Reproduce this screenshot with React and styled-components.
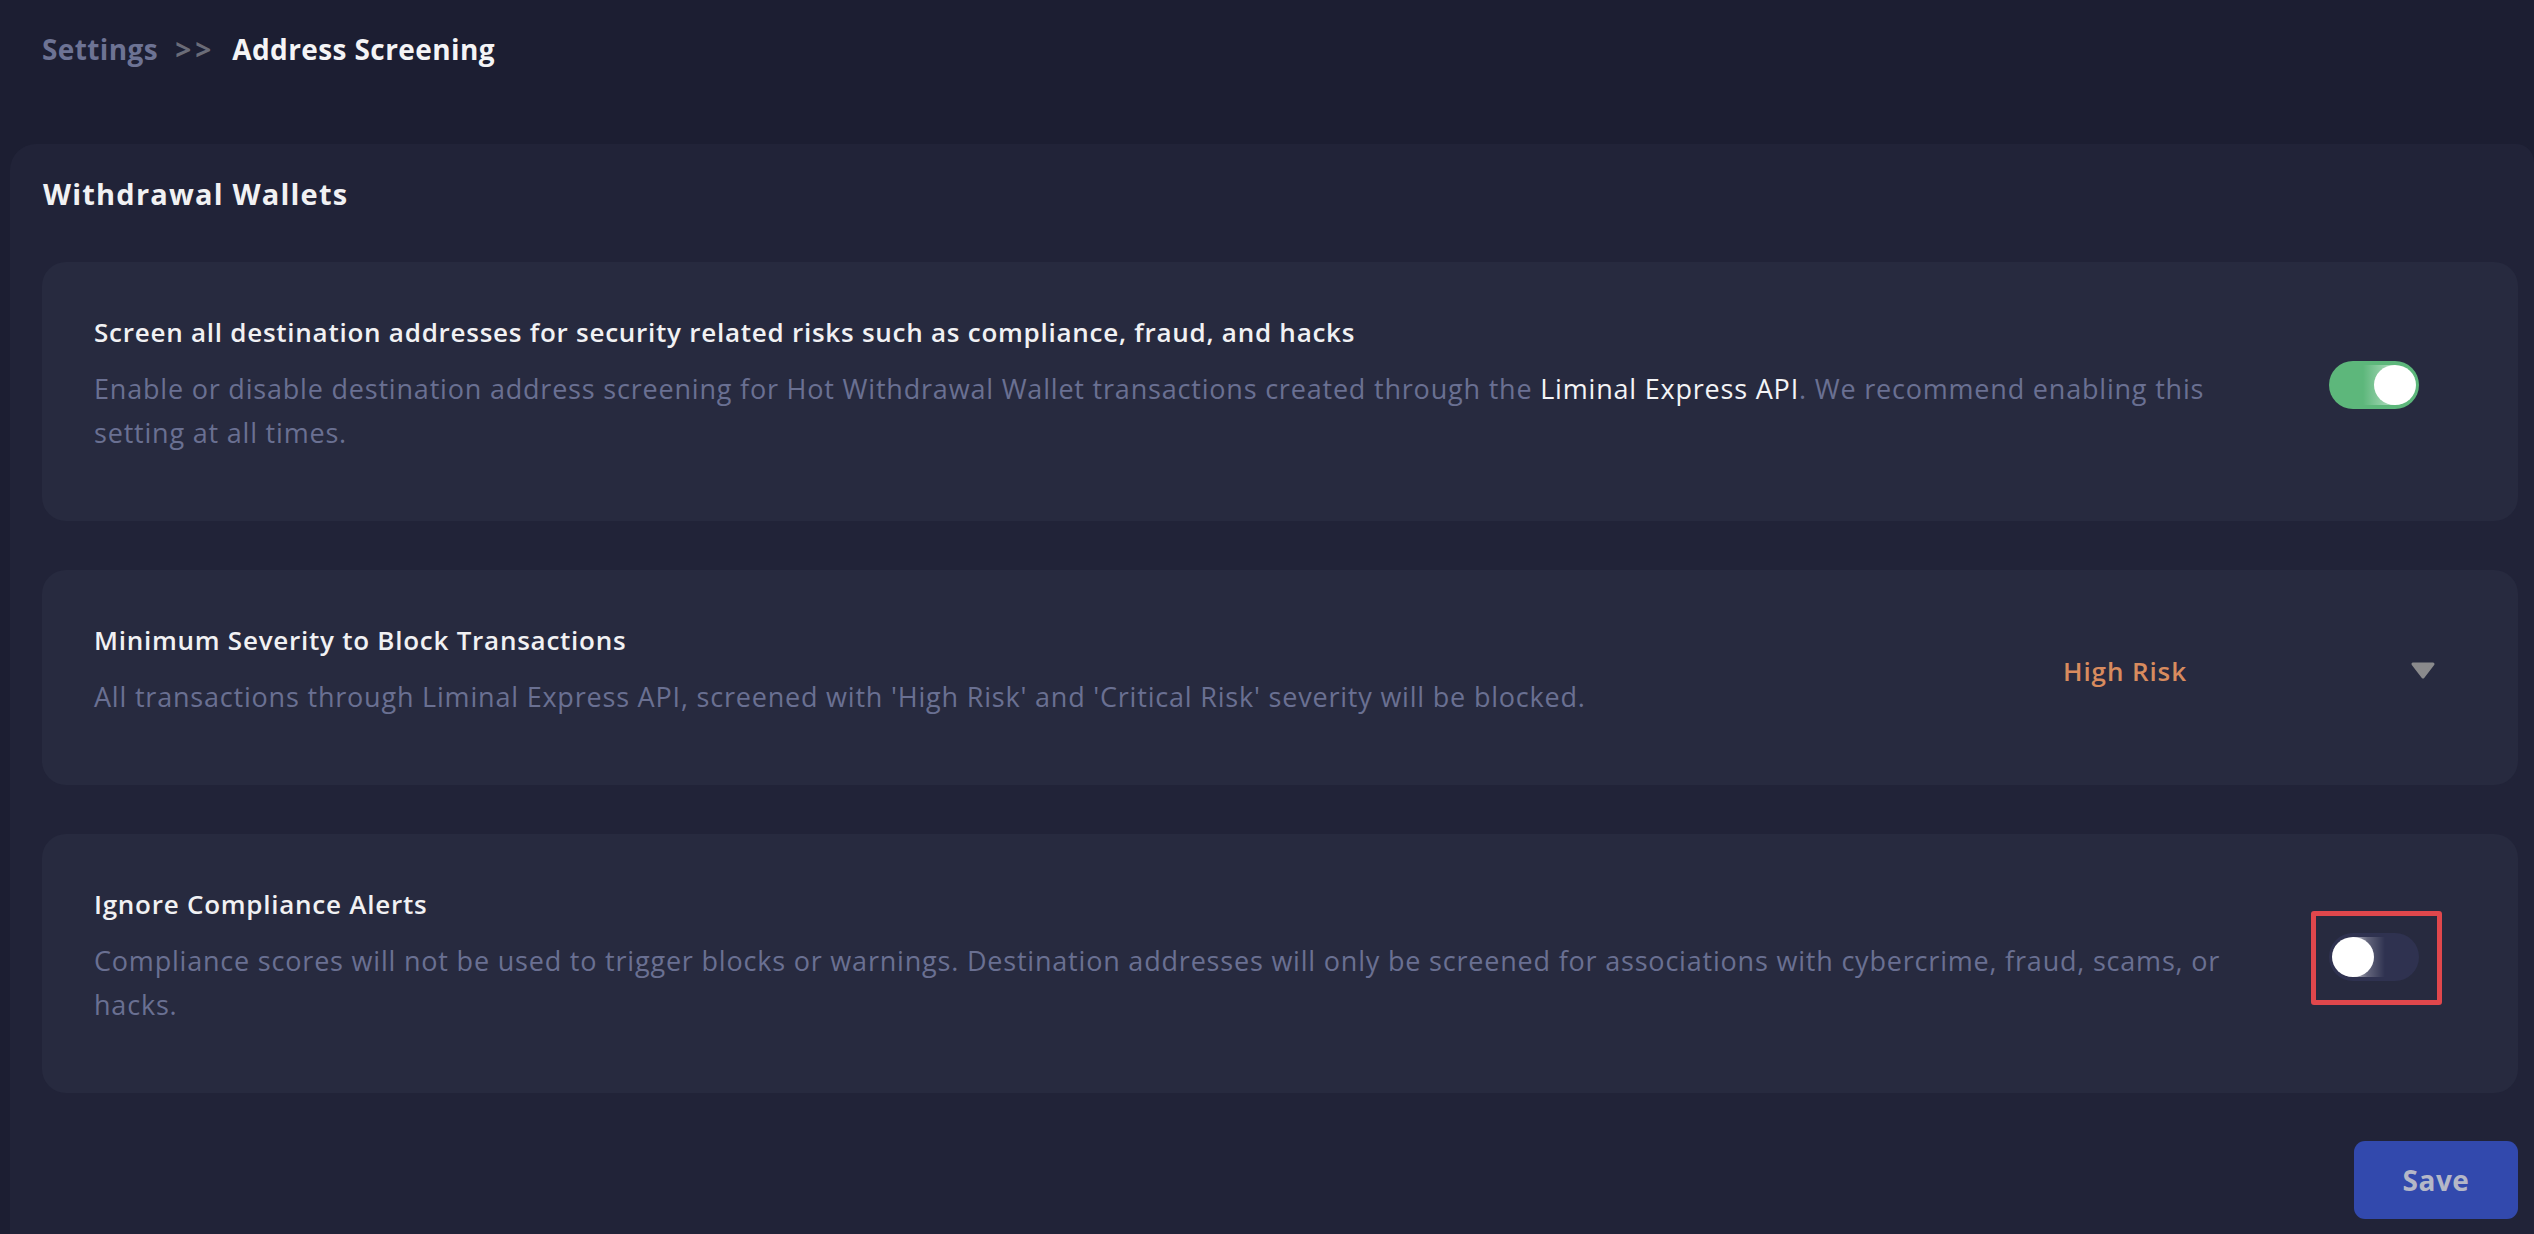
import React, { useState } from "react";
import styled, { createGlobalStyle } from "styled-components";

const GlobalStyle = createGlobalStyle`
  html, body {
    margin: 0;
    padding: 0;
    background: #1c1e32;
    font-family: "Open Sans", "Noto Sans", sans-serif;
    -webkit-font-smoothing: antialiased;
  }
`;

const Page = styled.div`
  min-height: 1234px;
  background: #1c1e32;
  overflow: hidden;
`;

const Breadcrumb = styled.div`
  display: flex;
  align-items: center;
  gap: 17px;
  padding: 31px 0 0 42px;
  height: 36px;
  margin-bottom: 77px;
  font-size: 28px;
  font-weight: 700;
  line-height: 36px;
  letter-spacing: 0.4px;
`;

const Crumb = styled.span`
  color: ${({ $active }) => ($active ? "#f4f4f6" : "#6d7394")};
`;

const Separator = styled.span`
  color: #6a6c78;
  letter-spacing: 4px;
`;

const Panel = styled.section`
  margin-left: 10px;
  background: #212338;
  border-radius: 26px 18px 0 0;
  padding: 32px 16px 40px 32px;
  min-height: 1050px;
  box-sizing: border-box;
`;

const PanelTitle = styled.h2`
  margin: 0 0 50px 1px;
  font-size: 29px;
  font-weight: 700;
  line-height: 36px;
  letter-spacing: 1.2px;
  color: #f1f1f3;
`;

const CardList = styled.div`
  display: flex;
  flex-direction: column;
  gap: 49px;
`;

const Card = styled.div`
  display: flex;
  align-items: center;
  background: #272a3f;
  border-radius: 24px;
  padding: 52px 82px 66px 52px;
`;

const TextBlock = styled.div`
  flex: 1;
  min-width: 0;
`;

const CardTitle = styled.div`
  font-size: 26px;
  font-weight: 600;
  line-height: 36px;
  letter-spacing: 0.75px;
  color: #f1f1f3;
  margin-bottom: 17px;
`;

const CardText = styled.div`
  font-size: 27px;
  font-weight: 500;
  line-height: 44px;
  letter-spacing: 0.8px;
  color: #6a7092;
`;

const Strong = styled.span`
  color: #f4f4f6;
`;

const ToggleSlot = styled.div`
  width: 187px;
  display: flex;
  justify-content: flex-end;
  padding-right: 17px;
  box-sizing: border-box;
  flex-shrink: 0;
`;

const Highlight = styled.div`
  position: relative;

  &::after {
    content: "";
    position: absolute;
    top: -22px;
    bottom: -24px;
    left: -18px;
    right: -23px;
    border: 5px solid #e0474c;
    border-radius: 3px;
    pointer-events: none;
  }
`;

const Track = styled.button`
  position: relative;
  width: 90px;
  height: 48px;
  border: none;
  padding: 0;
  border-radius: 24px;
  cursor: pointer;
  background: ${({ $on }) => ($on ? "#5db77b" : "#2f3250")};
  overflow: hidden;
  display: block;
`;

const Knob = styled.span`
  position: absolute;
  top: 4px;
  left: ${({ $on }) => ($on ? "45px" : "3px")};
  width: 42px;
  height: 40px;
  border-radius: 50%;
  background: #ffffff;
  z-index: 2;
`;

const Glow = styled.span`
  position: absolute;
  top: 4px;
  height: 40px;
  width: 32px;
  z-index: 1;
  left: ${({ $on }) => ($on ? "34px" : "24px")};
  background: ${({ $on }) =>
    $on
      ? "linear-gradient(to right, rgba(255,255,255,0) 0%, rgba(255,255,255,0.55) 100%)"
      : "linear-gradient(to right, rgba(255,255,255,0.7) 0%, rgba(255,255,255,0.25) 45%, rgba(255,255,255,0) 100%)"};
`;

const SelectSlot = styled.div`
  width: 373px;
  flex-shrink: 0;
  display: flex;
  align-items: center;
  justify-content: space-between;
  cursor: pointer;
`;

const SelectValue = styled.span`
  font-size: 26px;
  font-weight: 600;
  line-height: 36px;
  letter-spacing: 0.9px;
  color: #d88b5e;
`;

const Footer = styled.div`
  display: flex;
  justify-content: flex-end;
  margin-top: 48px;
`;

const SaveButton = styled.button`
  width: 164px;
  height: 78px;
  border: none;
  border-radius: 11px;
  background: #3249ad;
  color: #b4b7c7;
  font-family: "Open Sans", "Noto Sans", sans-serif;
  font-size: 28px;
  font-weight: 700;
  letter-spacing: 0.5px;
  cursor: pointer;
`;

const Toggle = ({ on, onChange }) => (
  <Track $on={on} onClick={() => onChange(!on)}>
    <Glow $on={on} />
    <Knob $on={on} />
  </Track>
);

const Caret = () => (
  <svg width="26" height="18" viewBox="0 0 26 18">
    <path
      d="M3 2 L23 2 L13 15 Z"
      fill="#8a8a8c"
      stroke="#8a8a8c"
      strokeWidth="3"
      strokeLinejoin="round"
    />
  </svg>
);

const App = () => {
  const [screening, setScreening] = useState(true);
  const [ignoreCompliance, setIgnoreCompliance] = useState(false);

  return (
    <Page>
      <GlobalStyle />
      <Breadcrumb>
        <Crumb>Settings</Crumb>
        <Separator>&gt;&gt;</Separator>
        <Crumb $active>Address Screening</Crumb>
      </Breadcrumb>

      <Panel>
        <PanelTitle>Withdrawal Wallets</PanelTitle>
        <CardList>
          <Card>
            <TextBlock>
              <CardTitle>
                Screen all destination addresses for security related risks such as
                compliance, fraud, and hacks
              </CardTitle>
              <CardText>
                Enable or disable destination address screening for Hot Withdrawal
                Wallet transactions created through the{" "}
                <Strong>Liminal Express API</Strong>. We recommend enabling this
                setting at all times.
              </CardText>
            </TextBlock>
            <ToggleSlot>
              <Toggle on={screening} onChange={setScreening} />
            </ToggleSlot>
          </Card>

          <Card>
            <TextBlock>
              <CardTitle>Minimum Severity to Block Transactions</CardTitle>
              <CardText>
                All transactions through Liminal Express API, screened with 'High
                Risk' and 'Critical Risk' severity will be blocked.
              </CardText>
            </TextBlock>
            <SelectSlot>
              <SelectValue>High Risk</SelectValue>
              <Caret />
            </SelectSlot>
          </Card>

          <Card>
            <TextBlock>
              <CardTitle>Ignore Compliance Alerts</CardTitle>
              <CardText>
                Compliance scores will not be used to trigger blocks or warnings.
                Destination addresses will only be screened for associations with
                cybercrime, fraud, scams, or hacks.
              </CardText>
            </TextBlock>
            <ToggleSlot>
              <Highlight>
                <Toggle on={ignoreCompliance} onChange={setIgnoreCompliance} />
              </Highlight>
            </ToggleSlot>
          </Card>
        </CardList>

        <Footer>
          <SaveButton>Save</SaveButton>
        </Footer>
      </Panel>
    </Page>
  );
};

export default App;
